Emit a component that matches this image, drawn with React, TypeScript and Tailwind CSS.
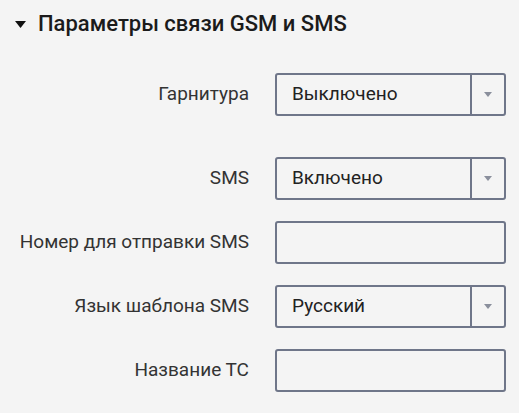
import React from "react";

type Field = {
  label: string;
  kind: "select" | "text";
  value?: string;
  extraGap?: boolean;
};

const fields: Field[] = [
  { label: "Гарнитура", kind: "select", value: "Выключено", extraGap: true },
  { label: "SMS", kind: "select", value: "Включено" },
  { label: "Номер для отправки SMS", kind: "text" },
  { label: "Язык шаблона SMS", kind: "select", value: "Русский" },
  { label: "Название ТС", kind: "text" },
];

const SelectBox = ({ value }: { value: string }) => (
  <div className="flex h-[43px] w-[231px] items-stretch rounded-[3px] border-2 border-[#6f7689]">
    <div className="flex flex-1 items-center pl-[15px] text-[19px] text-[#222]">{value}</div>
    <div className="flex w-[34px] items-center justify-center border-l-2 border-[#6f7689]">
      <svg width="8" height="5" viewBox="0 0 8 5">
        <path d="M0 0h8L4 5z" fill="#8a8f9c" />
      </svg>
    </div>
  </div>
);

const TextBox = () => (
  <input
    type="text"
    className="h-[43px] w-[231px] rounded-[3px] border-2 border-[#6f7689] bg-transparent px-[15px] text-[19px] outline-none"
  />
);

export default function App() {
  return (
    <div
      className="min-h-screen bg-[#f4f4f4] pt-[11px]"
      style={{ fontFamily: "Roboto, 'Noto Sans', sans-serif" }}
    >
      <div className="flex items-center gap-[12px] pl-[15px]">
        <svg width="11" height="7" viewBox="0 0 11 7">
          <path d="M0 0h11L5.5 7z" fill="#111" />
        </svg>
        <h2 className="text-[22px] font-medium leading-[26px] text-[#1b1b1b]">
          Параметры связи GSM и SMS
        </h2>
      </div>
      <div className="mt-[36px] flex flex-col gap-[21px]">
        {fields.map((f) => (
          <div
            key={f.label}
            className={`flex items-center gap-[26px] ${f.extraGap ? "mb-[20px]" : ""}`}
          >
            <div className="w-[249px] text-right text-[19px] text-[#333]">{f.label}</div>
            {f.kind === "select" ? <SelectBox value={f.value ?? ""} /> : <TextBox />}
          </div>
        ))}
      </div>
    </div>
  );
}
